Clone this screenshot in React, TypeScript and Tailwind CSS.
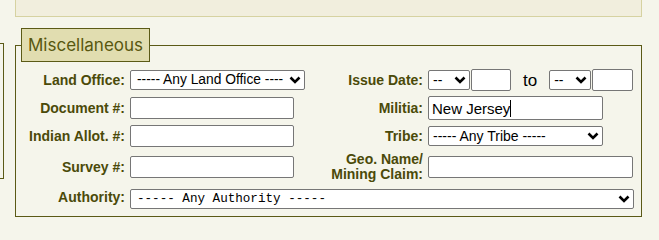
import React from "react";

function Chevron() {
  return (
    <svg width="12" height="8" viewBox="0 0 12 8" className="shrink-0">
      <path d="M1.5 1.5 L6 6 L10.5 1.5" fill="none" stroke="#000" strokeWidth="2.6" strokeLinecap="butt" strokeLinejoin="miter" />
    </svg>
  );
}

function FakeSelect({ text, className, textClass = "pl-[4px]" }: { text: string; className: string; textClass?: string }) {
  return (
    <div className={`h-[20px] flex items-center justify-between bg-white border border-[#767676] rounded-[2px] pr-[3px] text-black ${className}`}>
      <span className={`whitespace-pre leading-none ${textClass}`}>{text}</span>
      <Chevron />
    </div>
  );
}

function FakeInput({ className }: { className: string }) {
  return <div className={`h-[22px] bg-white border border-[#767676] rounded-[2px] ${className}`} />;
}

function Label({ children, className = "" }: { children: React.ReactNode; className?: string }) {
  return (
    <div className={`text-right font-bold text-[14px] leading-[15px] text-[#4b4a09] ${className}`}>{children}</div>
  );
}

export default function App() {
  return (
    <div className="min-h-[240px] bg-[#f5f5eb] font-['Liberation_Sans',Arial,sans-serif]">
      <div className="ml-[15px] w-[627px] h-[17px] bg-[#f1eedd] border-x border-b border-[#d6d2a1]" />
      <div className="flex mt-[11px]">
        <div className="w-[4px] h-[136px] mt-[15px] border-y border-r border-[#5b5a16]" />
        <fieldset className="ml-[11px] w-[627px] border border-[#5b5a16] pl-[5px] pt-[4px] pb-[2px]">
          <legend className="bg-[#e1ddb0] border border-[#5b5a16] px-[6px] py-[6px] text-[17px] leading-[20px] text-[#58570f] font-['Inter',sans-serif]">
            Miscellaneous
          </legend>
          <div className="grid grid-cols-[104px_175px_113px_206px] grid-rows-[28px_28px_28px_34px_30px] gap-x-[5px] items-center">
            <Label>Land Office:</Label>
            <FakeSelect text="----- Any Land Office ----" className="w-[175px] text-[13.8px]" textClass="pl-[6px]" />
            <Label>Issue Date:</Label>
            <div className="flex items-center">
              <FakeSelect text="--" className="w-[42px] text-[14px]" />
              <FakeInput className="w-[40px] ml-[1px]" />
              <span className="mx-[12px] text-[17px] leading-none text-black">to</span>
              <FakeSelect text="--" className="w-[42px] text-[14px]" />
              <FakeInput className="w-[41px] ml-[1px]" />
            </div>

            <Label>Document #:</Label>
            <FakeInput className="w-[164px]" />
            <Label>Militia:</Label>
            <div className="w-[175px] h-[24px] bg-white border border-[#767676] rounded-[2px] flex items-center pl-[3px] text-[15px] text-black">
              <span className="leading-none">New Jersey</span>
              <span className="w-[1px] h-[17px] bg-black" />
            </div>

            <Label>Indian Allot. #:</Label>
            <FakeInput className="w-[164px]" />
            <Label>Tribe:</Label>
            <FakeSelect text="----- Any Tribe -----" className="w-[175px] text-[14px]" />

            <Label>Survey #:</Label>
            <FakeInput className="w-[164px]" />
            <Label>
              Geo. Name/
              <br />
              Mining Claim:
            </Label>
            <FakeInput className="w-[205px]" />

            <Label className="-mt-[3px]">Authority:</Label>
            <div className="col-span-3">
              <FakeSelect
                text="----- Any Authority -----"
                className="w-[504px] text-[12.6px] font-['Liberation_Mono',monospace]"
                textClass="pl-[6px]"
              />
            </div>
          </div>
        </fieldset>
      </div>
    </div>
  );
}
